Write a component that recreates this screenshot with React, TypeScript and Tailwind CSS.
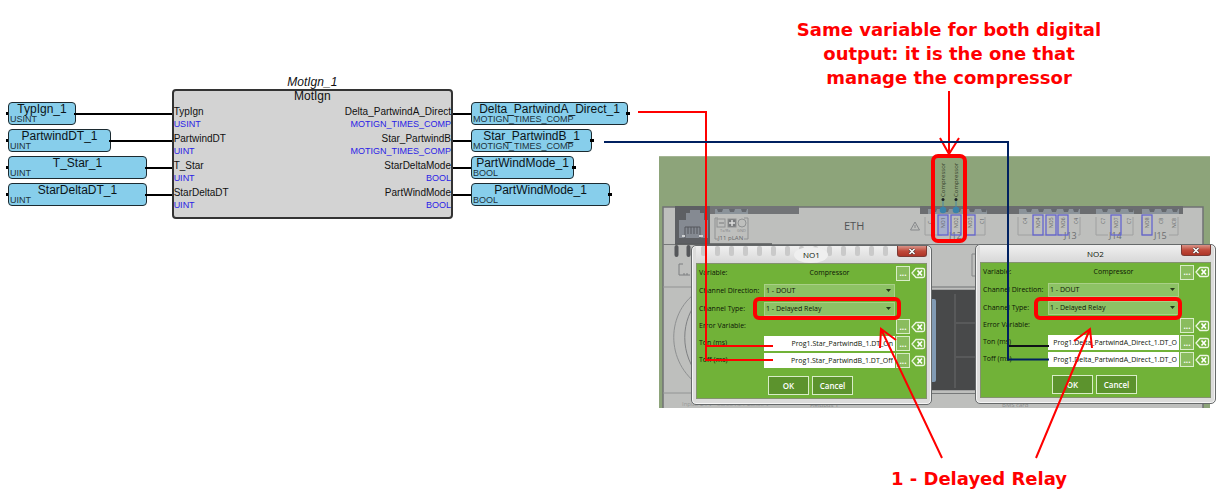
import React from "react";

type VariableNode = { name: string; type: string; width: string };
type Port = { name: string; type: string };

const inputNodes: VariableNode[] = [
  { name: "TypIgn_1", type: "USINT", width: "w-[68px]" },
  { name: "PartwindDT_1", type: "UINT", width: "w-[103px]" },
  { name: "T_Star_1", type: "UINT", width: "w-[139px]" },
  { name: "StarDeltaDT_1", type: "UINT", width: "w-[139px]" },
];

const outputNodes: VariableNode[] = [
  { name: "Delta_PartwindA_Direct_1", type: "MOTIGN_TIMES_COMP", width: "w-[157px]" },
  { name: "Star_PartwindB_1", type: "MOTIGN_TIMES_COMP", width: "w-[121px]" },
  { name: "PartWindMode_1", type: "BOOL", width: "w-[103px]" },
  { name: "PartWindMode_1", type: "BOOL", width: "w-[139px]" },
];

const inputPorts: Port[] = [
  { name: "TypIgn", type: "USINT" },
  { name: "PartwindDT", type: "UINT" },
  { name: "T_Star", type: "UINT" },
  { name: "StarDeltaDT", type: "UINT" },
];

const outputPorts: Port[] = [
  { name: "Delta_PartwindA_Direct", type: "MOTIGN_TIMES_COMP" },
  { name: "Star_PartwindB", type: "MOTIGN_TIMES_COMP" },
  { name: "StarDeltaMode", type: "BOOL" },
  { name: "PartWindMode", type: "BOOL" },
];

function Pin() {
  return <span className="h-[3px] w-1 shrink-0 bg-black" />;
}

function NodeBox({ node }: { node: VariableNode }) {
  return (
    <div
      className={`${node.width} flex h-[23px] shrink-0 flex-col rounded-[4px] border border-[#1c2a30] bg-[#87ceeb]`}
    >
      <span className="text-center text-[12px] leading-[12px] whitespace-nowrap text-[#0b1418]">
        {node.name}
      </span>
      <span className="pl-px text-[9px] leading-[9px] whitespace-nowrap text-[#1d333c]">{node.type}</span>
    </div>
  );
}

function PortList({ ports, side }: { ports: Port[]; side: string }) {
  return (
    <ul className={`flex flex-col gap-[3px] ${side}`}>
      {ports.map((port) => (
        <li key={port.name} className="flex flex-col">
          <span className="text-[10px] leading-[12px] text-[#111]">{port.name}</span>
          <span className="text-[9px] leading-[12px] text-[#2a22e6]">{port.type}</span>
        </li>
      ))}
    </ul>
  );
}

function FunctionDiagram() {
  return (
    <section aria-label="MotIgn function block" className="absolute top-[75px] left-[6px] flex w-[624px]">
      <div className="flex w-[166px] flex-col gap-1 pt-[27px]">
        {inputNodes.map((node) => (
          <div key={node.name} className="flex items-center">
            <div className="-mr-0.5 flex">
              <Pin />
            </div>
            <NodeBox node={node} />
            <span className="-ml-0.5 h-[2px] grow bg-black" />
          </div>
        ))}
      </div>
      <div className="flex w-[282px] flex-col">
        <p className="text-center text-[12px] leading-[14px] text-[#111] italic">MotIgn_1</p>
        <div className="h-[130px] rounded-[4px] border-2 border-[#333] bg-[#d3d3d3]">
          <p className="text-center text-[12px] leading-[11px] text-[#111]">MotIgn</p>
          <div className="flex justify-between pt-[4px]">
            <PortList ports={inputPorts} side="items-start" />
            <PortList ports={outputPorts} side="items-stretch text-right" />
          </div>
        </div>
      </div>
      <div className="flex flex-col gap-1 pt-[27px]">
        {outputNodes.map((node, i) => (
          <div key={i} className="flex items-center">
            <span className="h-[2px] w-[18px] shrink-0 bg-black" />
            <NodeBox node={node} />
            <div className="-ml-0.5 flex">
              <Pin />
            </div>
          </div>
        ))}
      </div>
    </section>
  );
}

const topTabs = [
  [717, 729, 741],
  [931, 943, 955, 969, 981],
  [1026, 1038, 1051, 1063, 1073],
  [1102, 1115, 1128],
  [1149, 1161, 1172],
];

const terminals = [
  { x: 930, label: "C", boxed: false },
  { x: 943, label: "NO1", boxed: true },
  { x: 956, label: "NO2", boxed: true },
  { x: 970, label: "NO3", boxed: true },
  { x: 982, label: "C1", boxed: false },
  { x: 1025, label: "C4", boxed: false },
  { x: 1038, label: "NO4", boxed: true },
  { x: 1051, label: "NO5", boxed: true },
  { x: 1063, label: "NO6", boxed: true },
  { x: 1076, label: "C4", boxed: false },
  { x: 1103, label: "C7", boxed: false },
  { x: 1116, label: "NO7", boxed: true },
  { x: 1129, label: "C7", boxed: false },
  { x: 1147, label: "NO8", boxed: true },
  { x: 1161, label: "C8", boxed: false },
  { x: 1174, label: "NC8", boxed: false },
];

function ControllerBoard() {
  return (
    <svg
      aria-label="Controller board"
      viewBox="659 156 551 252"
      className="absolute top-[156px] left-[659px] h-[252px] w-[551px]"
      fontFamily="'Open Sans', sans-serif"
      fill="none"
    >
      <rect x="659" y="156" width="551" height="252" fill="#8da47a" />
      <path d="M659 156.500H1210" stroke="#a4b594" />
      <rect x="663" y="207" width="540" height="201" fill="#bebfbd" />
      <path d="M663 408V207H1203V408" stroke="#707274" strokeWidth="1.500" />
      <rect x="675" y="206" width="124" height="8" fill="#727477" />
      <rect x="675" y="206" width="35" height="38" fill="#5d5f63" />
      <rect x="920" y="206" width="263" height="8" fill="#6b6d70" />

      {/* RJ45 socket */}
      <path d="M679 238V220H686V213H690V210H700V213H704V220H708V238Z" fill="#858a92" />
      <path d="M685 238V227H700V238M688 227V234M691 227V234M694 227V234M697 227V234" stroke="#54575c" />
      <path d="M682 236H685M699 236H703" stroke="#d0d2d4" strokeWidth="2" />

      <rect x="715" y="209" width="33" height="5" fill="#8b939a" />
      <rect x="928" y="209" width="59" height="5" fill="#8b939a" />
      <rect x="1019" y="209" width="61" height="5" fill="#8b939a" />
      <rect x="1096" y="209" width="38" height="5" fill="#8b939a" />
      <rect x="1142" y="209" width="37" height="5" fill="#8b939a" />
      {topTabs.flat().map((x) => (
        <path key={x} d={`M${x} 209h6l-1 3h-4z`} fill="#65696e" />
      ))}

      {/* pLAN connector */}
      <g stroke="#8f9192">
        <path d="M718 218H715V239H718M744 218H748V239H744" />
        <rect x="717" y="219" width="8" height="8" />
        <path d="M719 223H724" strokeWidth="1.500" />
        <rect x="728" y="219" width="8" height="8" fill="#77797b" />
        <path d="M729 223H735M732 220V226" stroke="#ddd" strokeWidth="1.500" />
        <circle cx="742" cy="223" r="4" />
      </g>
      <text x="720" y="232" fontSize="4" fill="#858788">Tx/Rx</text>
      <text x="737" y="232" fontSize="4" fill="#858788">GND</text>
      <text x="718" y="240" fontSize="6" fill="#66686a">J11 pLAN</text>
      <text x="844" y="230" fontSize="11" fill="#515355">ETH</text>
      <path d="M915 222L919.500 230H910.500ZM915 225V228" stroke="#85878a" />

      {/* relay terminals */}
      <g stroke="#9fa0a0">
        <path d="M925 217V235H942M963 235H985V217" />
        <path d="M1018 217V235H1062M1080 217V235H1078" />
        <path d="M1096 217V235H1108M1122 235H1133V217" />
        <path d="M1142 217V235H1152M1169 235H1178V217" />
      </g>
      <text x="949" y="239" fontSize="9" fill="#6c6e70">J12</text>
      <text x="1064" y="239" fontSize="9" fill="#6c6e70">J13</text>
      <text x="1109" y="239" fontSize="9" fill="#6c6e70">J14</text>
      <text x="1154" y="239" fontSize="9" fill="#6c6e70">J15</text>
      {terminals.map(({ x, label, boxed }) => (
        <g key={x}>
          {boxed && (
            <rect
              x={x - 5}
              y="215"
              width="10"
              height="20"
              stroke="#6464cf"
              strokeWidth="1.300"
              fill={label === "NO1" ? "#a6aecb" : "none"}
            />
          )}
          <text
            transform={`translate(${x + 2} ${label.length > 2 ? 228 : 224}) rotate(-90)`}
            fontSize="5"
            fill="#626466"
          >
            {label}
          </text>
        </g>
      ))}
      {[943, 956].map((x) => (
        <g key={x}>
          <path d={`M${x} 200V210`} stroke="#4b88a6" />
          <circle cx={x} cy="210" r="3.300" fill="#3a82a8" />
          <circle cx={x} cy="199.500" r="1.500" fill="#1c2026" />
          <text transform={`translate(${x + 2} 197) rotate(-90)`} fontSize="6" fill="#35402c">
            Compressor
          </text>
        </g>
      ))}

      {/* housing below the connectors */}
      <path d="M663 244.500H1203" stroke="#77797a" />
      <path d="M675 244H772" stroke="#595b5d" strokeWidth="1.500" />
      <path d="M676.500 247V255M688.500 247V255" stroke="#55575a" strokeWidth="4" strokeLinecap="round" />
      <path d="M683 264H679V275H690M684 273V275M687 273V275" stroke="#7c7e80" />
      <path d="M663 287H1203" stroke="#929393" />
      <path d="M976 254H972V276H976M932 287H1203" stroke="#858788" />
      <path d="M700 299C680 318 679 356 701 378" stroke="#7e8082" />
      <path d="M700 290C665 311 665 363 700 386" stroke="#8e9091" />
      <path d="M663 393H692" stroke="#929494" />
      <rect x="925" y="289.500" width="60" height="101" fill="#48494a" stroke="#a2a3a3" />
      <rect x="928" y="299" width="8" height="83" rx="2" fill="#829bb4" />
      <path d="M955 294V388M955 323H976M955 357H976" stroke="#58595a" strokeWidth="2" />
      <path d="M932 393.500H975" stroke="#77797a" />
      <text x="682" y="406" fontSize="6" fill="#989999">Input: 24 V~ 50/60 Hz / 28..36 V</text>
      <text x="810" y="407" fontSize="6" fill="#8b8d8d">Fieldbus 1</text>
      <text x="1002" y="407" fontSize="6" fill="#8b8d8d">BMS card</text>
    </svg>
  );
}

const ventSlots = Array.from({ length: 15 }, (_, i) => i);

function EraseIcon() {
  return (
    <svg viewBox="0 0 15 12" className="h-3 w-[15px]" fill="none" aria-hidden="true">
      <path d="M5 1.500H12Q13.500 1.500 13.500 3V9Q13.500 10.500 12 10.500H5L1 6Z" stroke="#eef7e4" strokeWidth="1.300" />
      <path d="M6.500 3.500L11 8.500M11 3.500L6.500 8.500" stroke="#fff" strokeWidth="1.700" />
    </svg>
  );
}

function RowActions({ label }: { label: string }) {
  return (
    <>
      <button
        type="button"
        aria-label={`Choose ${label}`}
        className="flex h-[15px] w-[14px] items-center justify-center border border-[#d9edc8] bg-[#8abc5e] text-[8px] leading-none font-bold text-white"
      >
        ...
      </button>
      <button type="button" aria-label={`Clear ${label}`}>
        <EraseIcon />
      </button>
    </>
  );
}

function SelectBox({ id, value }: { id: string; value: string }) {
  return (
    <div className="relative">
      <select
        id={id}
        className="block h-[14px] w-full appearance-none border border-[#a9d087] bg-[#8dc265] px-px text-[7px] leading-[12px] text-[#0c1406]"
      >
        <option>{value}</option>
      </select>
      <svg viewBox="0 0 5 3" className="absolute top-[5px] right-[4px] h-[3px] w-[5px]" aria-hidden="true">
        <path d="M0 0H5L2.500 3Z" fill="#26391a" />
      </svg>
    </div>
  );
}

const rowClass = "grid grid-cols-[64px_131px_14px_15px] items-center gap-x-px";

function ChannelDialog({
  title,
  on,
  off,
  place,
  overVents = false,
}: {
  title: string;
  on: string;
  off: string;
  place: string;
  overVents?: boolean;
}) {
  const id = title.toLowerCase();
  const fields = [
    { key: "ton", label: "Ton (ms)", value: on },
    { key: "toff", label: "Toff (ms)", value: off },
  ];
  return (
    <section
      aria-label={title}
      className={`absolute ${place} w-[241px] rounded-[5px] border border-[#66696a] bg-[#dcdcdb] px-1 pb-[5px] text-[7px] text-[#0c1406] shadow-[inset_0_0_0_1px_#f5f5f5]`}
    >
      <header className="relative grid h-[17px] grid-cols-[30px_1fr_30px] items-start bg-linear-to-b from-[#f0f0f0] to-[#d8d8d8]">
        {overVents && (
          <svg viewBox="0 0 231 17" className="absolute inset-0 h-full w-full" aria-hidden="true">
            {ventSlots.map((i) => (
              <rect key={i} x={5 + i * 14} y="0" width="5" height="10" rx="2" fill="#cacaca" />
            ))}
            <ellipse cx="115" cy="9" rx="17" ry="8" fill="#efefef" />
          </svg>
        )}
        <h2 className="relative col-start-2 pt-[3px] text-center text-[8px] leading-[12px]">{title}</h2>
        <button
          type="button"
          aria-label="Close"
          className="relative flex h-[11px] w-[30px] items-center justify-center rounded-b-[3px] border border-t-0 border-[#7c3a34] bg-linear-to-b from-[#d99389] via-[#c04a3b] to-[#ae3527]"
        >
          <svg viewBox="0 0 8 7" className="h-[7px] w-2" aria-hidden="true">
            <path d="M1.500 1L6.500 6M6.500 1L1.500 6" stroke="#4c3432" strokeWidth="2.800" />
            <path d="M1.500 1L6.500 6M6.500 1L1.500 6" stroke="#fff" strokeWidth="1.600" />
          </svg>
        </button>
      </header>
      <form className="border border-[#84926f] bg-[#71b238] pl-[2px]">
        <div className={`${rowClass} h-[18px]`}>
          <span>Variable:</span>
          <span className="text-center">Compressor</span>
          <RowActions label="variable" />
        </div>
        <div className={`${rowClass} h-[18px]`}>
          <label htmlFor={`${id}-direction`} className="whitespace-nowrap">
            Channel Direction:
          </label>
          <SelectBox id={`${id}-direction`} value="1 - DOUT" />
        </div>
        <div className={`${rowClass} h-[18px]`}>
          <label htmlFor={`${id}-type`}>Channel Type:</label>
          <SelectBox id={`${id}-type`} value="1 - Delayed Relay" />
        </div>
        <div className={`${rowClass} h-[17px]`}>
          <span className="col-span-2">Error Variable:</span>
          <RowActions label="error variable" />
        </div>
        {fields.map((field) => (
          <div key={field.key} className={`${rowClass} h-[17px]`}>
            <label htmlFor={`${id}-${field.key}`}>{field.label}</label>
            <input
              id={`${id}-${field.key}`}
              defaultValue={field.value}
              className="h-[15px] w-full bg-white px-[2px] text-right text-[7px] leading-[15px]"
            />
            <RowActions label={field.label} />
          </div>
        ))}
        <div className="flex justify-center gap-[3px] pt-[7px] pr-[4px] pb-[3px] text-[8px] font-semibold text-white">
          <button type="button" className="h-[19px] w-[41px] border border-[#d9edc8] bg-[#5c932d]">
            OK
          </button>
          <button type="button" className="h-[19px] w-[41px] border border-[#d9edc8] bg-[#5c932d]">
            Cancel
          </button>
        </div>
      </form>
    </section>
  );
}

function Annotations() {
  return (
    <svg
      aria-hidden="true"
      viewBox="0 0 1220 493"
      className="pointer-events-none absolute top-0 left-0 h-[493px] w-[1220px]"
      fill="none"
    >
      <g stroke="#ff0000" strokeWidth="2">
        <path d="M638 112H706V360H773M706 346H773" />
        <path d="M949 91V153M940 138L949 154L959 138" />
        <path d="M942 458L881 329M880 348L881 329L896 340" />
        <path d="M1036 458L1090 329M1074 341L1090 329L1092 348" />
      </g>
      <path d="M1008 346H1049" stroke="#101216" strokeWidth="2" />
      <path d="M604 142H1008V359.500H1049" stroke="#002060" strokeWidth="2" />
      <g stroke="#ff0000" strokeWidth="4">
        <rect x="933" y="156" width="32" height="85" rx="5" />
        <rect x="755" y="299" width="144" height="19" rx="4" />
        <rect x="1036" y="299" width="144" height="19" rx="4" />
      </g>
    </svg>
  );
}

export default function App() {
  return (
    <main className="relative min-h-screen w-full min-w-[1218px] overflow-hidden bg-white font-['Liberation_Sans',Arial,sans-serif]">
      <FunctionDiagram />
      <ControllerBoard />
      <div className="font-['Open_Sans',sans-serif]">
        <ChannelDialog
          title="NO1"
          on="Prog1.Star_PartwindB_1.DT_On"
          off="Prog1.Star_PartwindB_1.DT_Off"
          place="top-[245px] left-[691px]"
          overVents
        />
        <ChannelDialog
          title="NO2"
          on="Prog1.Delta_PartwindA_Direct_1.DT_O"
          off="Prog1.Delta_PartwindA_Direct_1.DT_O"
          place="top-[244px] left-[975px]"
        />
      </div>
      <Annotations />
      <p className="absolute top-[18px] left-[794px] w-[310px] text-center font-['DejaVu_Sans',Verdana,sans-serif] text-[18px] leading-6 font-bold text-[#ff0000]">
        Same variable for both digital output: it is the one that manage the compressor
      </p>
      <p className="absolute top-[467px] left-[879px] w-[200px] text-center font-['DejaVu_Sans',Verdana,sans-serif] text-[18px] leading-6 font-bold text-[#ff0000]">
        1 - Delayed Relay
      </p>
    </main>
  );
}
